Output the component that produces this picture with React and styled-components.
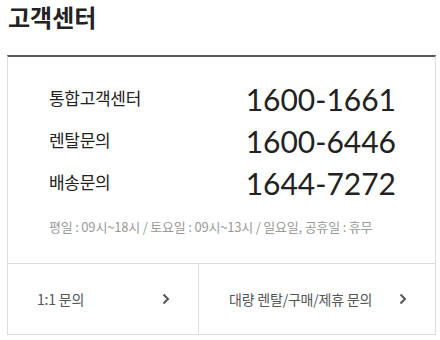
import React from "react";
import styled, { createGlobalStyle } from "styled-components";

const GlobalStyle = createGlobalStyle`
  body {
    margin: 0;
    background: #fff;
    font-family: "Noto Sans CJK KR", "Noto Sans", sans-serif;
    color: #222;
  }
`;

const Page = styled.div`
  padding: 0 4px 0 7px;
`;

const Title = styled.h2`
  margin: 0;
  padding: 2px 0 0 1px;
  height: 55px;
  box-sizing: border-box;
  font-size: 24px;
  font-weight: 700;
  line-height: 30px;
  color: #222;
`;

const Box = styled.div`
  border: 1px solid #ddd;
  border-top: 2px solid #5a5a5a;
`;

const Info = styled.div`
  padding: 21px 41px 27px 41px;
`;

const Row = styled.div`
  display: flex;
  align-items: center;
  justify-content: space-between;
  height: 42px;
`;

const Label = styled.span`
  font-size: 17px;
  font-weight: 400;
  color: #222;
  margin-top: -4px;
  letter-spacing: -0.3px;
`;

const Phone = styled.span`
  font-family: Lato, "Noto Sans", sans-serif;
  font-size: 30px;
  color: #222;
  margin-right: -2px;
`;

const Hours = styled.p`
  margin: 14px 0 0 0;
  font-size: 13px;
  line-height: 18px;
  color: #999;
  letter-spacing: -0.2px;
  white-space: nowrap;
`;

const Links = styled.div`
  display: grid;
  grid-template-columns: 190px 1fr;
  border-top: 1px solid #ddd;
  height: 70px;
`;

const LinkCell = styled.a`
  display: flex;
  align-items: center;
  justify-content: space-between;
  padding: ${(p) => p.$pad};
  color: #555;
  font-size: 14px;
  text-decoration: none;
  letter-spacing: -0.2px;
  & + & {
    border-left: 1px solid #ddd;
  }
`;

const Chevron = () => (
  <svg width="8" height="12" viewBox="0 0 8 12" fill="none">
    <path d="M1.5 1.5 L6 6 L1.5 10.5" stroke="#555" strokeWidth="2" />
  </svg>
);

export default function App() {
  return (
    <Page>
      <GlobalStyle />
      <Title>고객센터</Title>
      <Box>
        <Info>
          <Row>
            <Label>통합고객센터</Label>
            <Phone>1600-1661</Phone>
          </Row>
          <Row>
            <Label>렌탈문의</Label>
            <Phone>1600-6446</Phone>
          </Row>
          <Row>
            <Label>배송문의</Label>
            <Phone>1644-7272</Phone>
          </Row>
          <Hours>평일 : 09시~18시 / 토요일 : 09시~13시 / 일요일, 공휴일 : 휴무</Hours>
        </Info>
        <Links>
          <LinkCell $pad="0 28px 0 29px">
            1:1 문의 <Chevron />
          </LinkCell>
          <LinkCell $pad="0 28px 0 30px">
            대량 렌탈/구매/제휴 문의 <Chevron />
          </LinkCell>
        </Links>
      </Box>
    </Page>
  );
}
